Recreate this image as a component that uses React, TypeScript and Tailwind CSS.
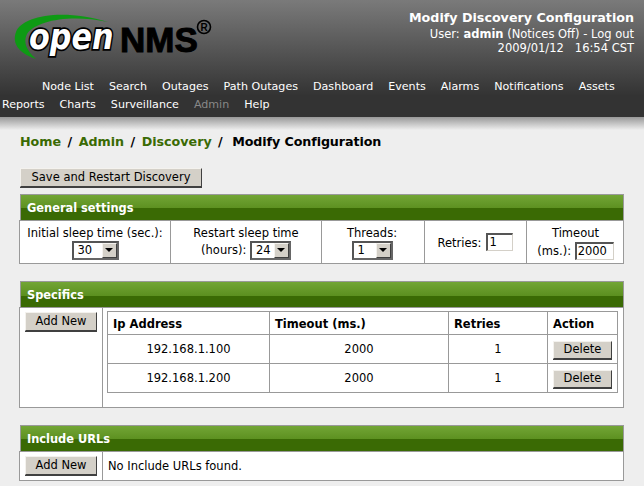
const topNav = ["Node List", "Search", "Outages", "Path Outages", "Dashboard", "Events", "Alarms", "Notifications", "Assets"];
const bottomNav = ["Reports", "Charts", "Surveillance", "Admin", "Help"];

const specifics = [
  { ip: "192.168.1.100", timeout: 2000, retries: 1 },
  { ip: "192.168.1.200", timeout: 2000, retries: 1 },
];

function Logo() {
  return (
    <svg width="204" height="54" viewBox="0 0 204 54" className="block overflow-visible">
      <path d="M24 47 C6 41 0 31 4 20 C10 4 50 -4 96 10 C60 2 24 8 15 22 C11 30 14 38 24 47 Z" fill="#0e9a14" />
      <text transform="translate(17 37) scale(0.84 1)" fontFamily="'DejaVu Sans', sans-serif" fontWeight="700" fontStyle="italic" fontSize="36" fill="#fff" stroke="#000" strokeWidth="3.5" paintOrder="stroke">open</text>
      <text x="108" y="40" fontFamily="'Liberation Sans', sans-serif" fontWeight="700" fontSize="35" fill="#000" stroke="#000" strokeWidth="1">NMS</text>
      <circle cx="192" cy="15" r="6.5" fill="none" stroke="#000" strokeWidth="1.6" />
      <text x="192" y="19" textAnchor="middle" fontFamily="'Liberation Sans', sans-serif" fontWeight="700" fontSize="10" fill="#000">R</text>
    </svg>
  );
}

function Button({ children, className }: { children: string; className: string }) {
  return (
    <button className={"flex items-center justify-center border border-t-[#f4f2ee] border-l-[#f4f2ee] border-r-[#404040] border-b-[#404040] bg-[#d4d0c8] text-black shadow-[0_1px_0_#404040] " + className}>
      {children}
    </button>
  );
}

function Select({ value, width }: { value: string; width: string }) {
  return (
    <span className={"inline-flex h-[19px] items-center justify-between border-2 border-t-[#555] border-l-[#555] border-r-[#666] border-b-[#666] bg-white pl-[4px] text-left align-middle " + width}>
      {value}
      <span className="flex h-[15px] w-[15px] items-center justify-center border border-t-[#f4f2ee] border-l-[#f4f2ee] border-r-[#404040] border-b-[#404040] bg-[#d4d0c8]">
        <span className="h-0 w-0 border-x-[4px] border-t-[4px] border-x-transparent border-t-black" />
      </span>
    </span>
  );
}

function Field({ value, width }: { value: string; width: string }) {
  return (
    <span className={"inline-block h-[18px] border border-t-2 border-l-2 border-t-[#555] border-l-[#555] border-r-[#d4d0c8] border-b-[#d4d0c8] bg-white pl-px text-left leading-[15px] align-middle " + width}>
      {value}
    </span>
  );
}

function Panel({ title, children }: { title: string; children: React.ReactNode }) {
  return (
    <section className="ml-[19px] w-[605px]">
      <h3 className="ml-px flex h-[26px] items-center border border-b-0 border-[#999] bg-[linear-gradient(#72a535_0,#5c9020_54%,#3a6a04_54%,#3a6a04_100%)] pt-[3px] pl-[6px] text-[11.4px] font-bold text-white">
        {title}
      </h3>
      <div className="flex border border-[#999] bg-white">{children}</div>
    </section>
  );
}

export default function App() {
  return (
    <div className="h-[486px] w-[644px] overflow-hidden bg-[#eeeeee] font-['DejaVu_Sans',sans-serif] text-[11.5px] text-black">
      <header className="relative h-[117px] bg-[linear-gradient(#7a7a7a,#333333_82%)] pt-[12px] pl-[12px] text-white">
        <Logo />
        <div className="absolute top-[11px] right-[10px] text-right leading-[14px]">
          <div className="mb-[2px] text-[12.7px] font-bold">Modify Discovery Configuration</div>
          <div>User: <b>admin</b> (Notices Off) - Log out</div>
          <div>2009/01/12 &nbsp;&nbsp;16:54 CST</div>
        </div>
        <nav className="absolute top-[78px] right-0 left-0 text-[11.1px] leading-[18px] whitespace-nowrap">
          <div className="flex gap-[15px] pl-[42px]">
            {topNav.map((item) => <a key={item}>{item}</a>)}
          </div>
          <div className="flex gap-[15px] pl-[2px]">
            {bottomNav.map((item) => (
              <a key={item} className={item === "Admin" ? "text-[#888]" : ""}>{item}</a>
            ))}
          </div>
        </nav>
      </header>
      <div className="h-[13px] bg-[linear-gradient(#999999,#eeeeee)]" />

      <h2 className="mt-[3px] ml-[20px] text-[12.7px] leading-[17px] font-bold [word-spacing:2px]">
        <a className="text-[#3a6a04]">Home</a> / <a className="text-[#3a6a04]">Admin</a> / <a className="text-[#3a6a04]">Discovery</a> / <span className="ml-[3px] tracking-[-0.1px] [word-spacing:0]">Modify Configuration</span>
      </h2>

      <Button className="mt-[18px] ml-[20px] h-[19px] w-[182px]">Save and Restart Discovery</Button>

      <div className="mt-[7px]">
        <Panel title="General settings">
          <div className="flex h-[42px] w-[151px] flex-col items-center justify-center border-r border-[#999] leading-[16px]">
            <span>Initial sleep time (sec.):</span>
            <Select value="30" width="w-[47px]" />
          </div>
          <div className="flex h-[42px] w-[151px] flex-col items-center justify-center border-r border-[#999] leading-[16px]">
            <span>Restart sleep time</span>
            <span>(hours): <Select value="24" width="w-[41px]" /></span>
          </div>
          <div className="flex h-[42px] w-[103px] flex-col items-center justify-center border-r border-[#999] pr-[2px] leading-[16px]">
            <span>Threads:</span>
            <Select value="1" width="w-[41px]" />
          </div>
          <div className="flex h-[42px] w-[102px] items-center justify-center gap-[5px] border-r border-[#999]">
            <span className="pt-[3px]">Retries:</span>
            <Field value="1" width="w-[27px]" />
          </div>
          <div className="flex h-[42px] flex-1 flex-col items-center justify-center pl-[1px] leading-[17px]">
            <span>Timeout</span>
            <span>(ms.): <Field value="2000" width="w-[39px]" /></span>
          </div>
        </Panel>
      </div>

      <div className="mt-[17px]">
        <Panel title="Specifics">
          <div className="h-[99px] w-[83px] border-r border-[#999] pt-[4px] pl-[5px]">
            <Button className="h-[19px] w-[72px] pt-px">Add New</Button>
          </div>
          <div className="pt-[3px] pl-[4px]">
            <table className="w-[510px] table-fixed border-collapse border border-[#999]">
              <colgroup>
                <col className="w-[162px]" />
                <col className="w-[179px]" />
                <col className="w-[99px]" />
                <col className="w-[70px]" />
              </colgroup>
              <thead>
                <tr className="h-[23px] text-left font-bold">
                  <th className="border border-[#999] pt-[3px] pl-[5px]">Ip Address</th>
                  <th className="border border-[#999] pt-[3px] pl-[5px]">Timeout (ms.)</th>
                  <th className="border border-[#999] pt-[3px] pl-[5px]">Retries</th>
                  <th className="border border-[#999] pt-[3px] pl-[5px]">Action</th>
                </tr>
              </thead>
              <tbody>
                {specifics.map((row) => (
                  <tr key={row.ip} className="h-[29px] text-center">
                    <td className="border border-[#999] pt-[2px]">{row.ip}</td>
                    <td className="border border-[#999] pt-[2px]">{row.timeout}</td>
                    <td className="border border-[#999] pt-[2px]">{row.retries}</td>
                    <td className="border border-[#999] pt-[2px]">
                      <Button className="ml-[5px] h-[18px] w-[59px]">Delete</Button>
                    </td>
                  </tr>
                ))}
              </tbody>
            </table>
          </div>
        </Panel>
      </div>

      <div className="mt-[17px]">
        <Panel title="Include URLs">
          <div className="h-[28px] w-[83px] border-r border-[#999] pt-[4px] pl-[5px]">
            <Button className="h-[19px] w-[72px] pt-px">Add New</Button>
          </div>
          <div className="flex items-center pt-[2px] pl-[5px]">No Include URLs found.</div>
        </Panel>
      </div>
    </div>
  );
}
